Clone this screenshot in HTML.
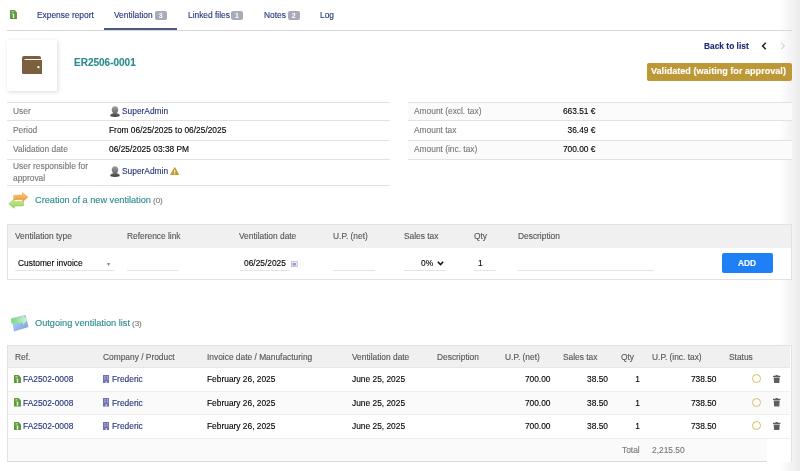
<!DOCTYPE html>
<html><head><meta charset="utf-8">
<style>
html,body{margin:0;padding:0;width:800px;height:471px;overflow:hidden;background:#fff;}
body{position:relative;font-family:"Liberation Sans",sans-serif;font-size:8.4px;color:#000;}
.a{position:absolute;white-space:nowrap;line-height:10px;will-change:transform;-webkit-text-stroke:0.12px currentColor;}
.nav{color:#25337d;}
.lbl{color:#777;}
.hd{color:#555;}
.lnk{color:#25337d;}
.r{text-align:right;}
.badge{position:absolute;will-change:transform;background:#a9abba;color:#fff;border-radius:2px;font-size:7px;font-weight:bold;text-align:center;line-height:9px;height:9px;}
</style></head><body>
<div style="position:absolute;left:779px;top:0px;width:21px;height:471px;background:linear-gradient(to right,rgba(240,240,240,0),#ebebeb)"></div>
<svg style="position:absolute;left:10px;top:10px" width="7" height="9" viewBox="0 0 7 9"><path d="M0 0.6Q0 0 0.6 0H4.6L7 2.4V8.4Q7 9 6.4 9H0.6Q0 9 0 8.4Z" fill="#5c9a3c"/><rect x="1.5" y="1.3" width="2.2" height="0.7" fill="#d6e8cc"/><rect x="1.5" y="2.8" width="2.2" height="0.7" fill="#d6e8cc"/><path d="M3.5 4V8" stroke="#e6f2df" stroke-width="1.1"/><path d="M2.4 5Q3.5 4.2 4.6 5M2.4 7Q3.5 7.8 4.6 7" stroke="#e6f2df" stroke-width="0.6" fill="none"/></svg>
<div class="a nav" style="left:37px;top:9.5px;">Expense report</div>
<div class="a nav" style="left:114px;top:9.5px;">Ventilation</div>
<div class="badge" style="left:155px;top:10.8px;width:11.5px;height:9.4px;line-height:9.4px">3</div>
<div class="a nav" style="left:187.5px;top:9.5px;">Linked files</div>
<div class="badge" style="left:231.2px;top:10.8px;width:11.8px;height:9.4px;line-height:9.4px">1</div>
<div class="a nav" style="left:263.5px;top:9.5px;">Notes</div>
<div class="badge" style="left:288px;top:10.8px;width:11.5px;height:9.4px;line-height:9.4px">2</div>
<div class="a nav" style="left:320px;top:9.5px;">Log</div>
<div style="position:absolute;left:7px;top:30px;width:785px;height:1px;background:#d8d8d8"></div>
<div style="position:absolute;left:104px;top:28px;width:73px;height:2px;background:#4a5a82"></div>
<div style="position:absolute;left:7px;top:40px;width:50px;height:51px;background:#fff;box-shadow:1px 1px 4px rgba(0,0,0,0.15)"></div>
<svg style="position:absolute;left:21.6px;top:55.8px" width="20.5" height="18.5" viewBox="0 0 20.5 18.5"><path d="M2 0H17Q19 0 19 2V4H0V2Q0 0 2 0Z" fill="#7a603e"/><path d="M0 3H18.3Q20.5 3 20.5 5.2V16.3Q20.5 18.5 18.3 18.5H2.2Q0 18.5 0 16.3Z" fill="#7a603e"/><rect x="2.6" y="3" width="17.9" height="0.95" fill="#fff"/><circle cx="16.4" cy="11.2" r="1.15" fill="#fff"/></svg>
<div class="a " style="left:74px;top:57.5px;font-size:10px;font-weight:bold;color:#2a8a8e">ER2506-0001</div>
<div class="a " style="left:704.2px;top:40.7px;font-weight:bold;color:#1f2c78">Back to list</div>
<svg style="position:absolute;left:761px;top:41.6px" width="6" height="8" viewBox="0 0 6 8"><path d="M4.8 0.8L1.6 4L4.8 7.2" stroke="#222" stroke-width="1.5" fill="none"/></svg>
<svg style="position:absolute;left:780px;top:41.6px" width="6" height="8" viewBox="0 0 6 8"><path d="M1.2 0.8L4.4 4L1.2 7.2" stroke="#d4d4d4" stroke-width="1.1" fill="none"/></svg>
<div style="position:absolute;left:647px;top:63.2px;width:145px;height:17.5px;background:#bd9836;border-radius:2px"></div>
<div class="a " style="left:651.2px;top:66.1px;font-size:9.1px;font-weight:bold;color:#fff">Validated (waiting for approval)</div>
<div style="position:absolute;left:7px;top:102px;width:383px;height:1px;background:#e2e2e2"></div>
<div style="position:absolute;left:7px;top:120px;width:383px;height:1px;background:#e2e2e2"></div>
<div style="position:absolute;left:7px;top:140px;width:383px;height:1px;background:#e2e2e2"></div>
<div style="position:absolute;left:7px;top:159px;width:383px;height:1px;background:#e2e2e2"></div>
<div style="position:absolute;left:7px;top:185px;width:383px;height:1px;background:#e2e2e2"></div>
<div class="a lbl" style="left:12.5px;top:105.7px;">User</div>
<div class="a lbl" style="left:12.5px;top:124.8px;">Period</div>
<div class="a lbl" style="left:12.5px;top:144.0px;">Validation date</div>
<div class="a lbl" style="left:12.5px;top:160.6px;line-height:11.6px">User responsible for<br>approval</div>
<svg style="position:absolute;left:109.5px;top:105.8px" width="10" height="11" viewBox="0 0 10 11"><defs><linearGradient id="ug1" x1="0" y1="0" x2="0" y2="1"><stop offset="0" stop-color="#a0a0a0"/><stop offset="0.6" stop-color="#707070"/><stop offset="1" stop-color="#3c3c3c"/></linearGradient></defs><path d="M5 0.2C7 0.2 8.3 1.8 8.3 3.8C8.3 5.4 7.5 6.6 6.6 7.2C8.6 7.6 9.8 8.4 9.8 9.5C9.8 10.5 7.8 10.9 5 10.9C2.2 10.9 0.2 10.5 0.2 9.5C0.2 8.4 1.4 7.6 3.4 7.2C2.5 6.6 1.7 5.4 1.7 3.8C1.7 1.8 3 0.2 5 0.2Z" fill="url(#ug1)"/></svg>
<div class="a lnk" style="left:122px;top:105.5px;">SuperAdmin</div>
<div class="a " style="left:108.5px;top:124.9px;">From 06/25/2025 to 06/25/2025</div>
<div class="a " style="left:108.5px;top:144.0px;">06/25/2025 03:38 PM</div>
<svg style="position:absolute;left:109.5px;top:166.4px" width="10" height="11" viewBox="0 0 10 11"><defs><linearGradient id="ug2" x1="0" y1="0" x2="0" y2="1"><stop offset="0" stop-color="#a0a0a0"/><stop offset="0.6" stop-color="#707070"/><stop offset="1" stop-color="#3c3c3c"/></linearGradient></defs><path d="M5 0.2C7 0.2 8.3 1.8 8.3 3.8C8.3 5.4 7.5 6.6 6.6 7.2C8.6 7.6 9.8 8.4 9.8 9.5C9.8 10.5 7.8 10.9 5 10.9C2.2 10.9 0.2 10.5 0.2 9.5C0.2 8.4 1.4 7.6 3.4 7.2C2.5 6.6 1.7 5.4 1.7 3.8C1.7 1.8 3 0.2 5 0.2Z" fill="url(#ug2)"/></svg>
<div class="a lnk" style="left:122px;top:166.3px;">SuperAdmin</div>
<svg style="position:absolute;left:169.7px;top:166.8px" width="9.4" height="8.6" viewBox="0 0 9.4 8.6"><path d="M4.7 0.6L8.9 7.9H0.5Z" fill="#c49a35" stroke="#c49a35" stroke-width="1" stroke-linejoin="round"/><rect x="4.2" y="2.8" width="1" height="2.8" fill="#fff"/><rect x="4.2" y="6.3" width="1" height="1" fill="#fff"/></svg>
<div style="position:absolute;left:408px;top:103px;width:384px;height:17px;background:#fbfbfb"></div>
<div style="position:absolute;left:408px;top:141px;width:384px;height:18px;background:#fbfbfb"></div>
<div style="position:absolute;left:408px;top:102px;width:384px;height:1px;background:#e2e2e2"></div>
<div style="position:absolute;left:408px;top:120px;width:384px;height:1px;background:#e2e2e2"></div>
<div style="position:absolute;left:408px;top:140px;width:384px;height:1px;background:#e2e2e2"></div>
<div style="position:absolute;left:408px;top:159px;width:384px;height:1px;background:#e2e2e2"></div>
<div class="a lbl" style="left:414px;top:105.5px;">Amount (excl. tax)</div>
<div class="a lbl" style="left:414px;top:124.5px;">Amount tax</div>
<div class="a lbl" style="left:414px;top:143.5px;">Amount (inc. tax)</div>
<div class="a r" style="left:495px;top:105.5px;width:100.5px">663.51 €</div>
<div class="a r" style="left:495px;top:124.5px;width:100.5px">36.49 €</div>
<div class="a r" style="left:495px;top:143.5px;width:100.5px">700.00 €</div>
<svg style="position:absolute;left:8px;top:192px" width="21" height="17" viewBox="0 0 21 17"><defs><linearGradient id="og" x1="0" y1="0" x2="0" y2="1"><stop offset="0" stop-color="#fbd07a"/><stop offset="1" stop-color="#eb9030"/></linearGradient><linearGradient id="gg" x1="0" y1="0" x2="0" y2="1"><stop offset="0" stop-color="#d8f2a0"/><stop offset="1" stop-color="#92cc50"/></linearGradient><linearGradient id="fo" x1="0" y1="0" x2="1" y2="0"><stop offset="0" stop-color="#fff" stop-opacity="0.25"/><stop offset="0.35" stop-color="#fff" stop-opacity="1"/></linearGradient><linearGradient id="fg" x1="0" y1="0" x2="1" y2="0"><stop offset="0.7" stop-color="#fff" stop-opacity="1"/><stop offset="1" stop-color="#fff" stop-opacity="0.4"/></linearGradient><mask id="mo"><rect width="21" height="17" fill="url(#fo)"/></mask><mask id="mg"><rect width="21" height="17" fill="url(#fg)"/></mask></defs><path d="M5.5 3.3L14.5 2.9V0.6L20 5.1L14.6 9.8V7.6L5.5 7.9Z" fill="url(#og)" stroke="#e58a2c" stroke-width="0.4" mask="url(#mo)"/><path d="M15.5 9.6L6.2 9.8V7.3L0.8 11.8L6.2 16.3V14L15.5 13.8Z" fill="url(#gg)" stroke="#7db848" stroke-width="0.5" mask="url(#mg)"/></svg>
<div class="a " style="left:35px;top:195.1px;font-size:9.2px;color:#2a8a8e">Creation of a new ventilation</div>
<div class="a " style="left:153.2px;top:196.1px;color:#777;font-size:8px">(0)</div>
<div style="position:absolute;left:7px;top:224px;width:783px;height:54px;border:1px solid #e2e2e2;background:#fff"></div>
<div style="position:absolute;left:8px;top:225px;width:783px;height:23px;background:#f0f0f0"></div>
<div class="a hd" style="left:14.5px;top:230.7px;">Ventilation type</div>
<div class="a hd" style="left:127px;top:230.7px;">Reference link</div>
<div class="a hd" style="left:238.5px;top:230.7px;">Ventilation date</div>
<div class="a hd" style="left:332.5px;top:230.7px;">U.P. (net)</div>
<div class="a hd" style="left:403.5px;top:230.7px;">Sales tax</div>
<div class="a hd" style="left:474px;top:230.7px;">Qty</div>
<div class="a hd" style="left:518px;top:230.7px;">Description</div>
<div class="a " style="left:18px;top:257.7px;">Customer invoice</div>
<div class="a " style="left:105.8px;top:258.9px;font-size:5.2px;color:#8a8a8a">&#9660;</div>
<div style="position:absolute;left:15px;top:270px;width:99px;height:1px;background:#e4e4e4"></div>
<div style="position:absolute;left:127px;top:270px;width:51px;height:1px;background:#e4e4e4"></div>
<div style="position:absolute;left:239.5px;top:270px;width:50px;height:1px;background:#e4e4e4"></div>
<div style="position:absolute;left:332.5px;top:270px;width:42px;height:1px;background:#e4e4e4"></div>
<div style="position:absolute;left:403.5px;top:270px;width:42px;height:1px;background:#e4e4e4"></div>
<div style="position:absolute;left:474px;top:270px;width:21.5px;height:1px;background:#e4e4e4"></div>
<div style="position:absolute;left:518px;top:270px;width:136px;height:1px;background:#e4e4e4"></div>
<div class="a " style="left:244px;top:257.7px;">06/25/2025</div>
<svg style="position:absolute;left:291px;top:260.6px" width="6.5" height="6" viewBox="0 0 6.5 6"><rect x="0.3" y="0.3" width="5.9" height="5.4" fill="#eef" stroke="#aab" stroke-width="0.6"/><rect x="1.5" y="2" width="3.5" height="2.5" fill="#99c"/></svg>
<div class="a " style="left:420.5px;top:257.7px;">0%</div>
<svg style="position:absolute;left:437px;top:261px" width="7" height="5" viewBox="0 0 7 5"><path d="M0.8 0.8L3.5 3.6L6.2 0.8" stroke="#111" stroke-width="1.5" fill="none"/></svg>
<div class="a " style="left:477.5px;top:257.7px;">1</div>
<div style="position:absolute;left:722px;top:253px;width:51px;height:20px;background:#1f80f5;border-radius:2px"></div>
<div class="a " style="left:738px;top:257.7px;font-weight:bold;color:#fff">ADD</div>
<svg style="position:absolute;left:10px;top:314px" width="19" height="18" viewBox="0 0 19 18"><defs><linearGradient id="bg2" x1="0" y1="0" x2="1" y2="1"><stop offset="0" stop-color="#cdd9f3"/><stop offset="1" stop-color="#6f9ce2"/></linearGradient><linearGradient id="ga" x1="0" y1="0" x2="1" y2="0"><stop offset="0" stop-color="#6adc74"/><stop offset="1" stop-color="#d4f7d4"/></linearGradient></defs><path d="M1.5 4L15.5 1L18.5 13L4 17.5Z" fill="url(#bg2)"/><path d="M1 4.5L12 3.5V1L17.5 5.5L13 11V8.5L1.5 9.5Z" fill="url(#ga)"/></svg>
<div class="a " style="left:35px;top:317.6px;font-size:9.2px;color:#2a8a8e">Outgoing ventilation list</div>
<div class="a " style="left:132.2px;top:318.9px;color:#777;font-size:8px">(3)</div>
<div style="position:absolute;left:7px;top:345px;width:783px;height:116px;border:1px solid #e2e2e2;border-bottom:none;background:#fff"></div>
<div style="position:absolute;left:8px;top:346px;width:782px;height:21px;background:#f0f0f0"></div>
<div style="position:absolute;left:8px;top:439px;width:759px;height:22px;background:#fafafa"></div>
<div style="position:absolute;left:8px;top:392px;width:782px;height:22px;background:#fafafa"></div>
<div style="position:absolute;left:8px;top:391px;width:782px;height:1px;background:#eeeeee"></div>
<div style="position:absolute;left:8px;top:414px;width:782px;height:1px;background:#eeeeee"></div>
<div style="position:absolute;left:8px;top:438px;width:782px;height:1px;background:#eeeeee"></div>
<div style="position:absolute;left:8px;top:367px;width:782px;height:1px;background:#e6e6e6"></div>
<div style="position:absolute;left:7px;top:461px;width:760px;height:1px;background:#d8d8d8"></div>
<div class="a hd" style="left:14.5px;top:351.5px;">Ref.</div>
<div class="a hd" style="left:103px;top:351.5px;">Company / Product</div>
<div class="a hd" style="left:206.5px;top:351.5px;">Invoice date / Manufacturing</div>
<div class="a hd" style="left:351.5px;top:351.5px;">Ventilation date</div>
<div class="a hd" style="left:437px;top:351.5px;">Description</div>
<div class="a hd" style="left:504.5px;top:351.5px;">U.P. (net)</div>
<div class="a hd" style="left:562.5px;top:351.5px;">Sales tax</div>
<div class="a hd" style="left:620.5px;top:351.5px;">Qty</div>
<div class="a hd" style="left:652px;top:351.5px;">U.P. (inc. tax)</div>
<div class="a hd" style="left:728.5px;top:351.5px;">Status</div>
<svg style="position:absolute;left:14.3px;top:374.8px" width="7" height="8.5" viewBox="0 0 7 8.5"><path d="M0 0.5Q0 0 0.5 0H4.6L7 2.4V8Q7 8.5 6.5 8.5H0.5Q0 8.5 0 8Z" fill="#5c9a3c"/><rect x="1.5" y="1.2" width="2.2" height="0.7" fill="#d6e8cc"/><rect x="1.5" y="2.6" width="2.2" height="0.7" fill="#d6e8cc"/><path d="M3.5 3.8V7.6" stroke="#e6f2df" stroke-width="1.1"/><path d="M2.4 4.8Q3.5 4 4.6 4.8M2.4 6.6Q3.5 7.4 4.6 6.6" stroke="#e6f2df" stroke-width="0.6" fill="none"/></svg>
<div class="a lnk" style="left:23.3px;top:374.0px;">FA2502-0008</div>
<svg style="position:absolute;left:102.9px;top:374.6px" width="6.4" height="8.6" viewBox="0 0 6.3 8.5" preserveAspectRatio="none"><rect x="0" y="0" width="6.3" height="8.5" fill="#7070ae"/><rect x="1.3" y="1.2" width="1.2" height="1.2" fill="#c8c8e4"/><rect x="3.8" y="1.2" width="1.2" height="1.2" fill="#c8c8e4"/><rect x="1.3" y="3.2" width="1.2" height="1.2" fill="#c8c8e4"/><rect x="3.8" y="3.2" width="1.2" height="1.2" fill="#c8c8e4"/><rect x="2.4" y="6" width="1.5" height="2.5" fill="#c8c8e4"/></svg>
<div class="a lnk" style="left:112.2px;top:374.0px;">Frederic</div>
<div class="a " style="left:206.5px;top:374.0px;">February 26, 2025</div>
<div class="a " style="left:351.5px;top:374.0px;">June 25, 2025</div>
<div class="a r" style="left:500px;top:374.0px;width:50.5px">700.00</div>
<div class="a r" style="left:560px;top:374.0px;width:48px">38.50</div>
<div class="a r" style="left:620px;top:374.0px;width:20px">1</div>
<div class="a r" style="left:660px;top:374.0px;width:56.5px">738.50</div>
<div style="position:absolute;left:752.2px;top:374.4px;width:7px;height:7px;border:0.85px solid #d5bd66;border-radius:50%"></div>
<svg style="position:absolute;left:773.3px;top:374.8px" width="7.4" height="8.6" viewBox="0 0 8 9" preserveAspectRatio="none"><rect x="0" y="0.8" width="8" height="1.3" fill="#5e5e5e"/><rect x="2.8" y="0" width="2.4" height="1" fill="#5e5e5e"/><path d="M0.7 2.6H7.3L6.8 8.4Q6.7 9 6.1 9H1.9Q1.3 9 1.2 8.4Z" fill="#5e5e5e"/></svg>
<svg style="position:absolute;left:14.3px;top:398.3px" width="7" height="8.5" viewBox="0 0 7 8.5"><path d="M0 0.5Q0 0 0.5 0H4.6L7 2.4V8Q7 8.5 6.5 8.5H0.5Q0 8.5 0 8Z" fill="#5c9a3c"/><rect x="1.5" y="1.2" width="2.2" height="0.7" fill="#d6e8cc"/><rect x="1.5" y="2.6" width="2.2" height="0.7" fill="#d6e8cc"/><path d="M3.5 3.8V7.6" stroke="#e6f2df" stroke-width="1.1"/><path d="M2.4 4.8Q3.5 4 4.6 4.8M2.4 6.6Q3.5 7.4 4.6 6.6" stroke="#e6f2df" stroke-width="0.6" fill="none"/></svg>
<div class="a lnk" style="left:23.3px;top:397.5px;">FA2502-0008</div>
<svg style="position:absolute;left:102.9px;top:398.1px" width="6.4" height="8.6" viewBox="0 0 6.3 8.5" preserveAspectRatio="none"><rect x="0" y="0" width="6.3" height="8.5" fill="#7070ae"/><rect x="1.3" y="1.2" width="1.2" height="1.2" fill="#c8c8e4"/><rect x="3.8" y="1.2" width="1.2" height="1.2" fill="#c8c8e4"/><rect x="1.3" y="3.2" width="1.2" height="1.2" fill="#c8c8e4"/><rect x="3.8" y="3.2" width="1.2" height="1.2" fill="#c8c8e4"/><rect x="2.4" y="6" width="1.5" height="2.5" fill="#c8c8e4"/></svg>
<div class="a lnk" style="left:112.2px;top:397.5px;">Frederic</div>
<div class="a " style="left:206.5px;top:397.5px;">February 26, 2025</div>
<div class="a " style="left:351.5px;top:397.5px;">June 25, 2025</div>
<div class="a r" style="left:500px;top:397.5px;width:50.5px">700.00</div>
<div class="a r" style="left:560px;top:397.5px;width:48px">38.50</div>
<div class="a r" style="left:620px;top:397.5px;width:20px">1</div>
<div class="a r" style="left:660px;top:397.5px;width:56.5px">738.50</div>
<div style="position:absolute;left:752.2px;top:397.9px;width:7px;height:7px;border:0.85px solid #d5bd66;border-radius:50%"></div>
<svg style="position:absolute;left:773.3px;top:398.3px" width="7.4" height="8.6" viewBox="0 0 8 9" preserveAspectRatio="none"><rect x="0" y="0.8" width="8" height="1.3" fill="#5e5e5e"/><rect x="2.8" y="0" width="2.4" height="1" fill="#5e5e5e"/><path d="M0.7 2.6H7.3L6.8 8.4Q6.7 9 6.1 9H1.9Q1.3 9 1.2 8.4Z" fill="#5e5e5e"/></svg>
<svg style="position:absolute;left:14.3px;top:421.8px" width="7" height="8.5" viewBox="0 0 7 8.5"><path d="M0 0.5Q0 0 0.5 0H4.6L7 2.4V8Q7 8.5 6.5 8.5H0.5Q0 8.5 0 8Z" fill="#5c9a3c"/><rect x="1.5" y="1.2" width="2.2" height="0.7" fill="#d6e8cc"/><rect x="1.5" y="2.6" width="2.2" height="0.7" fill="#d6e8cc"/><path d="M3.5 3.8V7.6" stroke="#e6f2df" stroke-width="1.1"/><path d="M2.4 4.8Q3.5 4 4.6 4.8M2.4 6.6Q3.5 7.4 4.6 6.6" stroke="#e6f2df" stroke-width="0.6" fill="none"/></svg>
<div class="a lnk" style="left:23.3px;top:421.0px;">FA2502-0008</div>
<svg style="position:absolute;left:102.9px;top:421.6px" width="6.4" height="8.6" viewBox="0 0 6.3 8.5" preserveAspectRatio="none"><rect x="0" y="0" width="6.3" height="8.5" fill="#7070ae"/><rect x="1.3" y="1.2" width="1.2" height="1.2" fill="#c8c8e4"/><rect x="3.8" y="1.2" width="1.2" height="1.2" fill="#c8c8e4"/><rect x="1.3" y="3.2" width="1.2" height="1.2" fill="#c8c8e4"/><rect x="3.8" y="3.2" width="1.2" height="1.2" fill="#c8c8e4"/><rect x="2.4" y="6" width="1.5" height="2.5" fill="#c8c8e4"/></svg>
<div class="a lnk" style="left:112.2px;top:421.0px;">Frederic</div>
<div class="a " style="left:206.5px;top:421.0px;">February 26, 2025</div>
<div class="a " style="left:351.5px;top:421.0px;">June 25, 2025</div>
<div class="a r" style="left:500px;top:421.0px;width:50.5px">700.00</div>
<div class="a r" style="left:560px;top:421.0px;width:48px">38.50</div>
<div class="a r" style="left:620px;top:421.0px;width:20px">1</div>
<div class="a r" style="left:660px;top:421.0px;width:56.5px">738.50</div>
<div style="position:absolute;left:752.2px;top:421.4px;width:7px;height:7px;border:0.85px solid #d5bd66;border-radius:50%"></div>
<svg style="position:absolute;left:773.3px;top:421.8px" width="7.4" height="8.6" viewBox="0 0 8 9" preserveAspectRatio="none"><rect x="0" y="0.8" width="8" height="1.3" fill="#5e5e5e"/><rect x="2.8" y="0" width="2.4" height="1" fill="#5e5e5e"/><path d="M0.7 2.6H7.3L6.8 8.4Q6.7 9 6.1 9H1.9Q1.3 9 1.2 8.4Z" fill="#5e5e5e"/></svg>
<div class="a " style="left:622px;top:444.5px;color:#777">Total</div>
<div class="a " style="left:652px;top:444.5px;color:#777">2,215.50</div>
</body></html>
